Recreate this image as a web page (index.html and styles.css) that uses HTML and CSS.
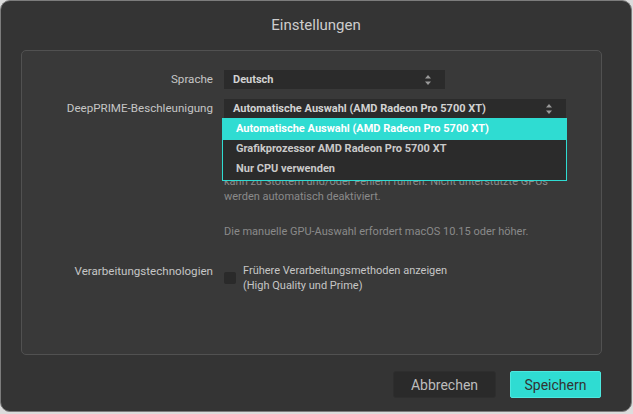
FILE: index.html
```html
<!DOCTYPE html>
<html lang="de">
<head>
<meta charset="utf-8">
<title>Einstellungen</title>
<link rel="stylesheet" href="styles.css">
</head>
<body>
<div class="window">
  <div class="title">Einstellungen</div>
  <div class="panel">
    <div class="form">
      <div class="label">Sprache</div>
      <div class="field">
        <div class="select select-short">
          <span>Deutsch</span>
          <svg class="arrows" width="6" height="10" viewBox="0 0 6 10"><path d="M3 0 L6 3.5 L0 3.5 Z M3 10 L6 6.5 L0 6.5 Z" fill="#9a9a9a"/></svg>
        </div>
      </div>

      <div class="label">DeepPRIME-Beschleunigung</div>
      <div class="field">
        <div class="select-wrap">
          <div class="select select-long">
            <span>Automatische Auswahl (AMD Radeon Pro 5700 XT)</span>
            <svg class="arrows" width="6" height="10" viewBox="0 0 6 10"><path d="M3 0 L6 3.5 L0 3.5 Z M3 10 L6 6.5 L0 6.5 Z" fill="#9a9a9a"/></svg>
          </div>
          <div class="menu">
            <div class="item active">Automatische Auswahl (AMD Radeon Pro 5700 XT)</div>
            <div class="item">Grafikprozessor AMD Radeon Pro 5700 XT</div>
            <div class="item">Nur CPU verwenden</div>
          </div>
        </div>
        <div class="desc">
          <p>kann zu Stottern und/oder Fehlern führen. Nicht unterstützte GPUs<br>werden automatisch deaktiviert.</p>
          <p>Die manuelle GPU-Auswahl erfordert macOS 10.15 oder höher.</p>
        </div>
      </div>

      <div class="label label-center">Verarbeitungstechnologien</div>
      <div class="field check-row">
        <span class="checkbox"></span>
        <span class="check-text">Frühere Verarbeitungsmethoden anzeigen<br>(High Quality und Prime)</span>
      </div>
    </div>
  </div>
  <div class="footer">
    <button class="btn btn-cancel">Abbrechen</button>
    <button class="btn btn-save">Speichern</button>
  </div>
</div>
</body>
</html>
```

FILE: styles.css
```css
* { box-sizing: border-box; }

html, body {
  margin: 0;
  padding: 0;
}

body {
  background: #dcdcdc;
  font-family: Roboto, "Liberation Sans", sans-serif;
  width: 633px;
  height: 414px;
  overflow: hidden;
}

.window {
  width: 632px;
  height: 412px;
  background: #343434;
  border: 1px solid #7c7c7c;
  border-radius: 10px;
  display: flex;
  flex-direction: column;
}

.title {
  height: 49px;
  padding-top: 15px;
  text-align: center;
  font-size: 15px;
  line-height: 18px;
  color: #cdcdcd;
}

.panel {
  margin: 0 29px 0 20px;
  height: 305px;
  background: #393939;
  border: 1px solid #515151;
  border-radius: 5px;
  padding-top: 19px;
}

.form {
  display: grid;
  grid-template-columns: 191px 1fr;
  column-gap: 11px;
  row-gap: 10px;
  align-items: start;
}

.label {
  text-align: right;
  font-size: 11.6px;
  line-height: 19px;
  color: #c6c6c6;
}

.label-center {
  align-self: center;
}

.field {
  position: relative;
}

.select {
  height: 19px;
  background: #2b2b2b;
  display: flex;
  align-items: center;
  justify-content: space-between;
  padding: 0 14px 0 9px;
  font-size: 11px;
  font-weight: 700;
  color: #d2d2d2;
}

.select-short { width: 221px; }
.select-long { width: 342px; }

.arrows { display: block; }

.select-wrap { position: relative; }

.menu {
  position: absolute;
  left: -2px;
  top: 19px;
  width: 345px;
  background: #2b2b2b;
  border: 1px solid #2fdcd2;
  z-index: 2;
}

.item {
  height: 20px;
  line-height: 18px;
  padding-left: 13px;
  font-size: 11px;
  font-weight: 700;
  color: #c9c9c9;
}

.item.active {
  height: 22px;
  line-height: 22px;
  margin: -1px -1px 0 -1px;
  padding-left: 14px;
  background: #2fdcd2;
  color: #ffffff;
}

.desc {
  margin-top: 56px;
  font-size: 11px;
  line-height: 15px;
  color: #8a8a8a;
}

.desc p { margin: 0 0 20px 0; }
.desc p:last-child { margin-bottom: 0; }

.check-row {
  display: flex;
  align-items: center;
  gap: 7px;
  margin-top: 14px;
}

.checkbox {
  width: 12px;
  height: 12px;
  background: #2a2a2a;
  border-radius: 2px;
  flex: none;
}

.check-text {
  font-size: 11px;
  line-height: 15px;
  color: #c6c6c6;
}

.footer {
  display: flex;
  justify-content: flex-end;
  gap: 14px;
  padding: 16px 30px 0 0;
}

.btn {
  height: 27px;
  font-family: Roboto, "Liberation Sans", sans-serif;
  font-size: 14px;
  border-radius: 3px;
  cursor: default;
}

.btn-cancel {
  width: 103px;
  background: #2a2a2a;
  border: 1px solid #2e2e2e;
  color: #bdbdbd;
}

.btn-save {
  width: 91px;
  background: #2fdcd2;
  border: 1px solid #4de8df;
  color: #333333;
  border-radius: 2px;
}
```
